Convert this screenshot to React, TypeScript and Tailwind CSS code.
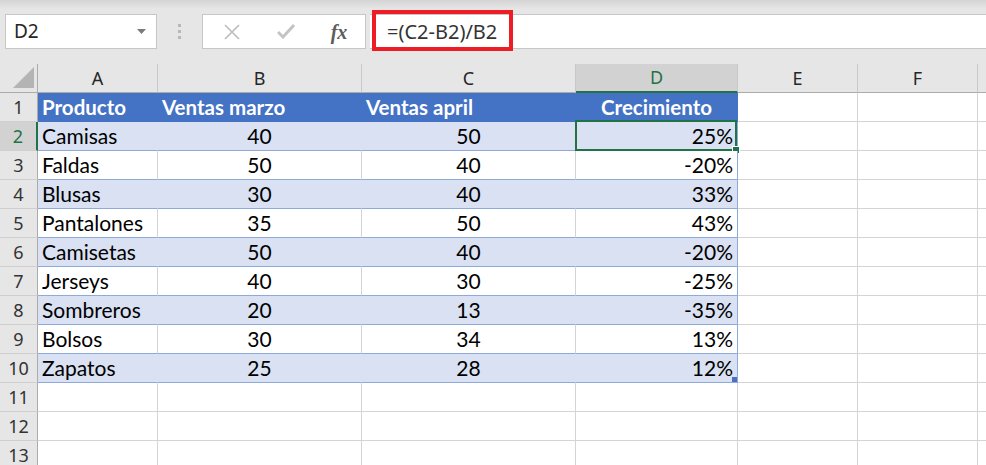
import React from 'react';

const cols = [
  { key: 'A', w: 'w-[120px]' },
  { key: 'B', w: 'w-[204px]' },
  { key: 'C', w: 'w-[214px]' },
  { key: 'D', w: 'w-[162px]' },
  { key: 'E', w: 'w-[120px]' },
  { key: 'F', w: 'w-[120px]' },
];

const rows = [
  ['Camisas', '40', '50', '25%'],
  ['Faldas', '50', '40', '-20%'],
  ['Blusas', '30', '40', '33%'],
  ['Pantalones', '35', '50', '43%'],
  ['Camisetas', '50', '40', '-20%'],
  ['Jerseys', '40', '30', '-25%'],
  ['Sombreros', '20', '13', '-35%'],
  ['Bolsos', '30', '34', '13%'],
  ['Zapatos', '25', '28', '12%'],
];

function RowHeader({ n, active }: { n: number; active?: boolean }) {
  return (
    <div
      className={
        'w-[38px] shrink-0 flex items-center justify-center border-b border-[#cfcfcf] text-[18px] ' +
        (active
          ? 'bg-[#d2d2d2] text-[#217346] border-r-2 border-r-[#217346]'
          : 'bg-[#e6e6e6] text-[#333] border-r border-r-[#ababab]')
      }
      style={{ fontFamily: '"Noto Sans", sans-serif' }}
    >
      {n}
    </div>
  );
}

function EmptyCells({ from }: { from: number }) {
  return (
    <>
      {cols.slice(from).map((c) => (
        <div key={c.key} className={c.w + ' shrink-0 bg-white border-r border-b border-[#d4d4d4]'} />
      ))}
      <div className="flex-1 bg-white border-b border-[#d4d4d4]" />
    </>
  );
}

export default function App() {
  return (
    <div className="w-[986px] h-[465px] overflow-hidden bg-[#e6e6e6] font-['Lato',sans-serif] text-black">
      {/* formula bar */}
      <div className="relative h-[64px] pt-[14px] flex items-start bg-[linear-gradient(to_bottom,#d4d4d4_0px,#e6e6e6_9px)]">
        <div className="ml-[5px] w-[152px] h-[35px] bg-white border border-[#c6c6c6] flex items-center justify-between pl-[8px] pr-[10px]">
          <span className="text-[19px] text-[#262626]" style={{ fontFamily: '"Noto Sans", sans-serif' }}>D2</span>
          <svg width="9" height="5" viewBox="0 0 9 5"><path d="M0 0h9L4.5 5z" fill="#7a7a7a" /></svg>
        </div>
        <div className="w-[45px] h-[35px] flex flex-col items-center justify-center gap-[3px]">
          <div className="w-[3px] h-[3px] bg-[#b8b8b8]" />
          <div className="w-[3px] h-[3px] bg-[#b8b8b8]" />
          <div className="w-[3px] h-[3px] bg-[#b8b8b8]" />
        </div>
        <div className="w-[164px] h-[35px] bg-white border border-[#c6c6c6] flex items-center">
          <div className="w-[55px] flex justify-center pl-[2px]">
            <svg width="16" height="16" viewBox="0 0 16 16">
              <path d="M1 1L15 15M15 1L1 15" stroke="#bcbcbc" strokeWidth="1.6" />
            </svg>
          </div>
          <div className="w-[55px] flex justify-center">
            <svg width="18" height="15" viewBox="0 0 18 15">
              <path d="M1 8L6 13L17 1" stroke="#c4c4c4" strokeWidth="3" fill="none" />
            </svg>
          </div>
          <div className="w-[52px] flex justify-center">
            <span className="italic font-bold text-[20px] text-[#5c5c5c]" style={{ fontFamily: '"Liberation Serif", serif' }}>fx</span>
          </div>
        </div>
        <div className="ml-[4px] flex-1 h-[35px] bg-white border-y border-[#c6c6c6] flex items-center pl-[17px]">
          <span className="text-[20px] text-[#333]" style={{ fontFamily: '"Noto Sans", sans-serif' }}>=(C2-B2)/B2</span>
        </div>
        <div className="absolute left-[372px] top-[10px] w-[141px] h-[41px] border-[4px] border-[#ee1c25]" />
      </div>

      {/* column headers */}
      <div className="flex h-[29px]">
        <div className="w-[38px] shrink-0 relative border-r border-b border-[#ababab] bg-[#e6e6e6]">
          <svg className="absolute left-[13px] top-[3px]" width="22" height="22" viewBox="0 0 22 22">
            <path d="M21 0V21H0z" fill="#b4b4b4" />
          </svg>
        </div>
        {cols.map((c) => (
          <div
            key={c.key}
            className={
              c.w +
              ' shrink-0 flex items-center justify-center text-[18px] border-r border-r-[#c8c8c8] ' +
              (c.key === 'D'
                ? 'bg-[#d2d2d2] text-[#217346] border-b-2 border-b-[#217346]'
                : 'bg-[#e6e6e6] text-[#262626] border-b border-b-[#ababab]')
            }
            style={{ fontFamily: '"Noto Sans", sans-serif' }}
          >
            {c.key}
          </div>
        ))}
        <div className="flex-1 bg-[#e6e6e6] border-b border-[#ababab]" />
      </div>

      {/* row 1: table header */}
      <div className="flex h-[29px]">
        <RowHeader n={1} />
        <div className="w-[120px] shrink-0 bg-[#4472c4] border-r border-b border-[#4472c4] text-white font-bold text-[20.5px] flex items-center pl-[4px]">Producto</div>
        <div className="w-[204px] shrink-0 bg-[#4472c4] border-r border-b border-[#4472c4] text-white font-bold text-[20.5px] flex items-center pl-[4px]">Ventas marzo</div>
        <div className="w-[214px] shrink-0 bg-[#4472c4] border-r border-b border-[#4472c4] text-white font-bold text-[20.5px] flex items-center pl-[4px]">Ventas april</div>
        <div className="w-[162px] shrink-0 bg-[#4472c4] border-r border-b border-[#4472c4] text-white font-bold text-[20.5px] flex items-center justify-center">Crecimiento</div>
        <EmptyCells from={4} />
      </div>

      {rows.map((r, i) => {
        const n = i + 2;
        const band = n % 2 === 0;
        const bg = band ? 'bg-[#d9e1f2]' : 'bg-white';
        const vline = band ? 'border-r-[#d9e1f2]' : 'border-r-[#d4d4d4]';
        return (
          <div key={n} className="flex h-[29px]">
            <RowHeader n={n} active={n === 2} />
            <div className={'w-[120px] shrink-0 border-r border-b border-b-[#8eaadb] text-[21px] flex items-center pl-[4px] ' + bg + ' ' + vline}>{r[0]}</div>
            <div className={'w-[204px] shrink-0 border-r border-b border-b-[#8eaadb] text-[21px] flex items-center justify-center ' + bg + ' ' + vline}>{r[1]}</div>
            <div className={'w-[214px] shrink-0 border-r border-b border-b-[#8eaadb] text-[21px] flex items-center justify-center ' + bg + ' ' + vline}>{r[2]}</div>
            <div className={'relative w-[162px] shrink-0 border-r border-b border-[#8eaadb] text-[21px] flex items-center justify-end pr-[4px] ' + bg}>
              {r[3]}
              {n === 2 && (
                <>
                  <div className="absolute left-[-1px] top-[-2px] w-[162px] h-[31px] border-2 border-[#217346]" />
                  <div className="absolute left-[156px] top-[24px] w-[8px] h-[8px] bg-[#217346] border border-white" />
                </>
              )}
              {n === 10 && <div className="absolute right-[0px] bottom-[0px] w-[5px] h-[5px] bg-[#4e6fc0]" />}
            </div>
            <EmptyCells from={4} />
          </div>
        );
      })}

      {[11, 12, 13].map((n) => (
        <div key={n} className="flex h-[29px]">
          <RowHeader n={n} />
          <EmptyCells from={0} />
        </div>
      ))}
    </div>
  );
}
